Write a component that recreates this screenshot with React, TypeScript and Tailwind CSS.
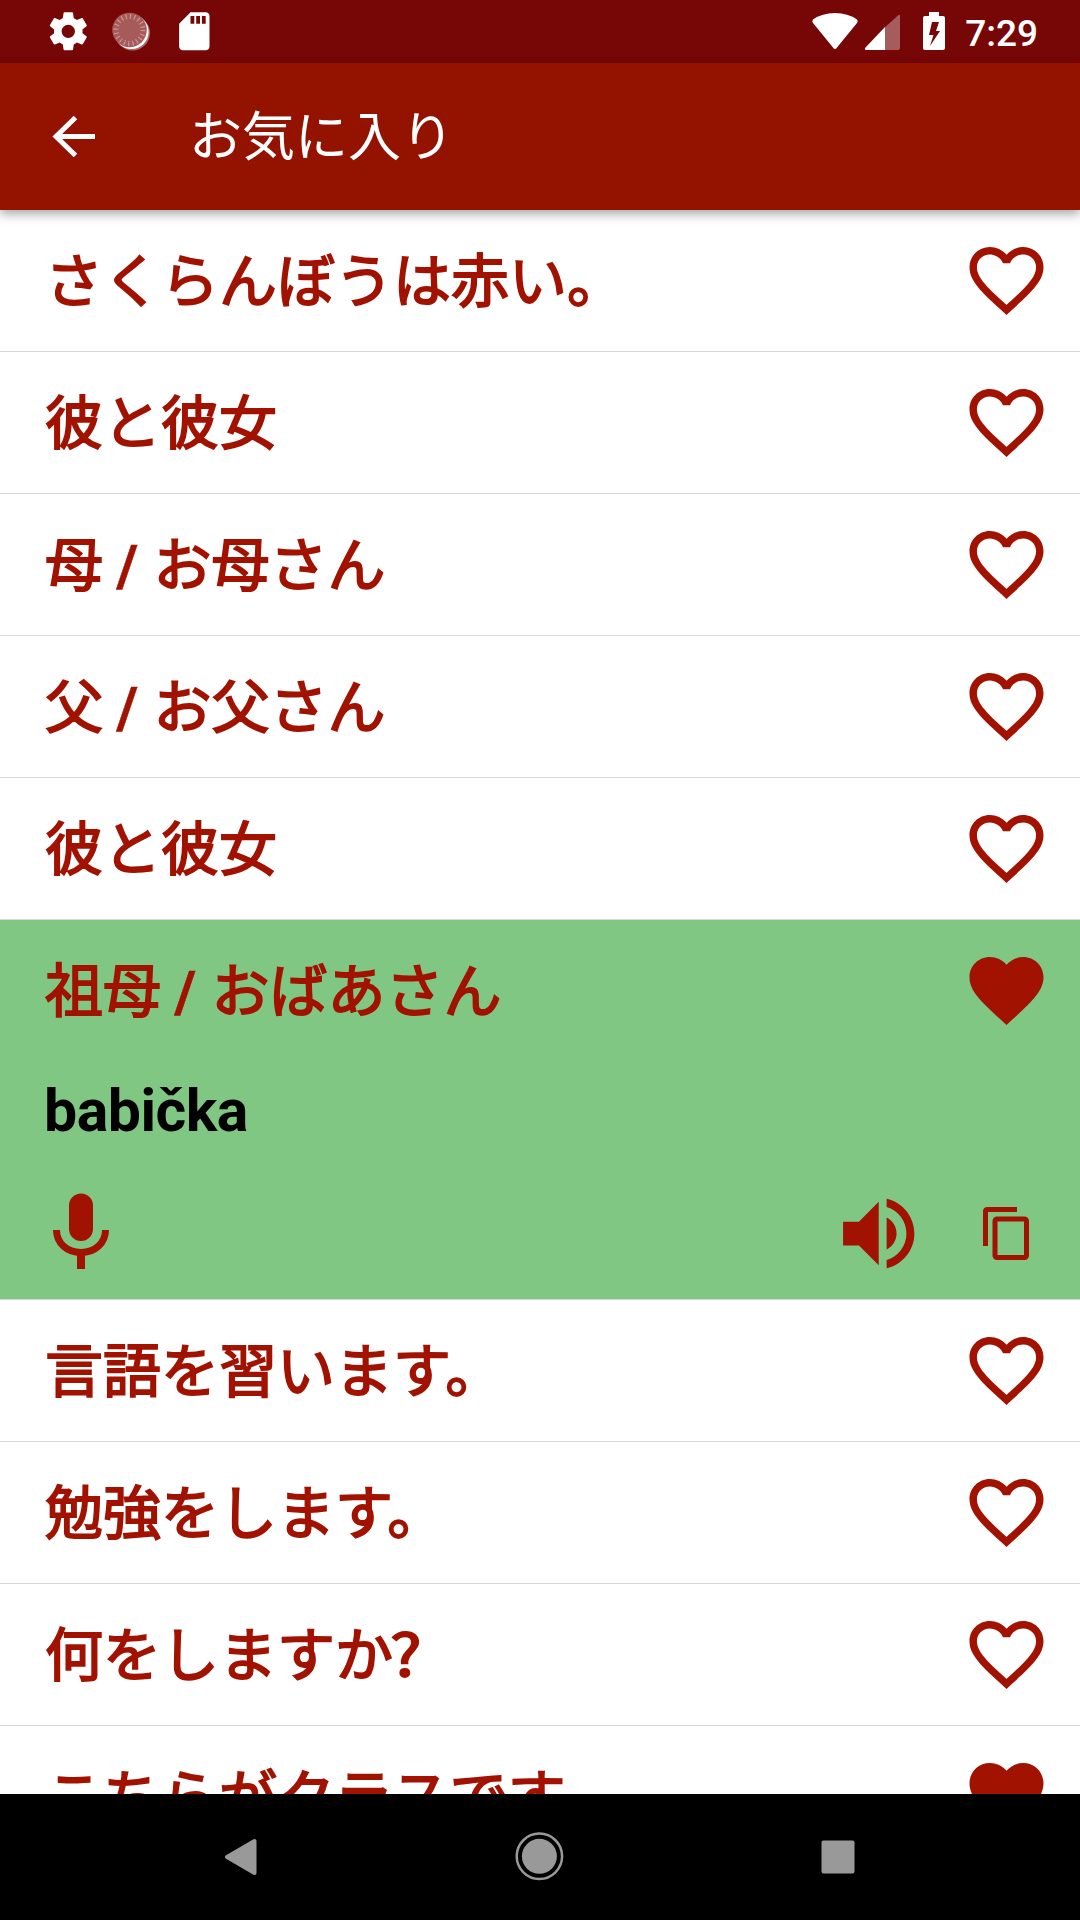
const heartFull =
  "M12 21.35l-1.45-1.32C5.4 15.36 2 12.28 2 8.5 2 5.42 4.42 3 7.5 3c1.74 0 3.41.81 4.5 2.09C13.09 3.81 14.76 3 16.5 3 19.58 3 22 5.42 22 8.5c0 3.78-3.4 6.86-8.55 11.54L12 21.35z";
const heartBorder =
  "M16.5 3c-1.74 0-3.41.81-4.5 2.09C10.91 3.81 9.24 3 7.5 3 4.42 3 2 5.42 2 8.5c0 3.78 3.4 6.86 8.55 11.54L12 21.35l1.45-1.32C18.6 15.36 22 12.28 22 8.5 22 5.42 19.58 3 16.5 3zm-4.4 15.55l-.1.1-.1-.1C7.14 14.24 4 11.39 4 8.5 4 6.5 5.5 5 7.5 5c1.54 0 3.04.99 3.57 2.36h1.87C13.46 5.99 14.96 5 16.5 5c2 0 3.5 1.5 3.5 3.5 0 2.89-3.14 5.74-7.9 10.05z";

type Phrase = { text: string; liked?: boolean; translation?: string };

const phrases: Phrase[] = [
  { text: "さくらんぼうは赤い。" },
  { text: "彼と彼女" },
  { text: "母 / お母さん" },
  { text: "父 / お父さん" },
  { text: "彼と彼女" },
  { text: "祖母 / おばあさん", liked: true, translation: "babička" },
  { text: "言語を習います。" },
  { text: "勉強をします。" },
  { text: "何をしますか?" },
  { text: "こちらがクラスです。", liked: true },
];

function Heart({ filled }: { filled?: boolean }) {
  return (
    <svg viewBox="0 0 75 68" className="h-[68px] w-[75px] shrink-0" fill="#a11200">
      <path transform="translate(-6.9 -11.1) scale(3.7)" d={filled ? heartFull : heartBorder} />
    </svg>
  );
}

function StatusBar() {
  return (
    <div className="flex h-[63px] shrink-0 items-center justify-between bg-[#770606] text-white">
      <svg viewBox="0 0 240 63" className="h-[63px] w-[240px]" fill="white">
        <path
          transform="translate(45.5 8.5) scale(1.9)"
          d="M19.43 12.98c.04-.32.07-.64.07-.98s-.03-.66-.07-.98l2.11-1.65c.19-.15.24-.42.12-.64l-2-3.46c-.12-.22-.39-.3-.61-.22l-2.49 1c-.52-.4-1.08-.73-1.69-.98l-.38-2.65C14.46 2.18 14.25 2 14 2h-4c-.25 0-.46.18-.49.42l-.38 2.65c-.61.25-1.17.59-1.69.98l-2.49-1c-.23-.09-.49 0-.61.22l-2 3.46c-.13.22-.07.49.12.64l2.11 1.65c-.04.32-.07.65-.07.98s.03.66.07.98l-2.11 1.65c-.19.15-.24.42-.12.64l2 3.46c.12.22.39.3.61.22l2.49-1c.52.4 1.08.73 1.69.98l.38 2.65c.03.24.24.42.49.42h4c.25 0 .46-.18.49-.42l.38-2.65c.61-.25 1.17-.59 1.69-.98l2.49 1c.23.09.49 0 .61-.22l2-3.46c.12-.22.07-.49-.12-.64l-2.11-1.65zM12 15.5c-1.93 0-3.5-1.57-3.5-3.5s1.57-3.5 3.5-3.5 3.5 1.57 3.5 3.5-1.57 3.5-3.5 3.5z"
        />
        <circle cx="132.5" cy="33" r="17.5" fill="#ad6a6a" />
        <circle cx="131.4" cy="31.8" r="17.2" />
        <circle cx="129.5" cy="30" r="17.3" fill="#a65a5a" />
        <circle cx="129.5" cy="30" r="13.5" fill="none" stroke="#c99494" strokeWidth="5" strokeDasharray="1.2 3.041" />
        <path
          transform="translate(171.5 8.5) scale(1.9)"
          d="M18 2h-8L4.02 8 4 20c0 1.100.9 2 2 2h12c1.100 0 2-.9 2-2V4c0-1.100-.9-2-2-2zm-6 6h-2V4h2v4zm3 0h-2V4h2v4zm3 0h-2V4h2v4z"
        />
      </svg>
      <div className="flex items-center pr-[42px]">
        <svg viewBox="810 0 140 63" className="mr-[15px] h-[63px] w-[140px]" fill="white">
          <path d="M835 49Q836 49 837 47.500L857 23Q858.500 21 857 19.500Q848 13 835 13T813 19.500Q811.500 21 813 23L833 47.500Q834 49 835 49Z" />
          <path d="M885 50V27.200L898 15.500Q900 14 900 16V48Q900 50 898 50Z" fillOpacity=".35" />
          <path d="M885 27V50H866Q864 50 865.500 47.500Z" />
          <path d="M929 12H939V16H943Q945 16 945 18V48Q945 50 943 50H925Q923 50 923 48V18Q923 16 925 16H929ZM932 22L929 35H933.500L930 46L940 31H936L939 22Z" fillRule="evenodd" />
        </svg>
        <span className="pt-[4px] font-['Roboto',sans-serif] text-[37px] leading-[59px] font-medium">7:29</span>
      </div>
    </div>
  );
}

// the slash comes from a real bold face, everything else is thickened by a stroke
function PhraseText({ text }: { text: string }) {
  return (
    <span className="pt-[2px] font-['Roboto','Noto_Sans_CJK_JP',sans-serif] text-[58px] leading-[68px] whitespace-pre text-[#a11200] [-webkit-text-stroke:1.8px_#a11200]">
      {text.split(/( \/ |\?)/).map((part, i) => {
        if (part === " / ") return <span key={i} className="-ml-px mr-px font-bold [-webkit-text-stroke:0.4px_#a11200]">{part}</span>;
        if (part === "?") return <span key={i} className="-ml-[3px] inline-block origin-left scale-x-115 font-['Noto_Sans_CJK_JP',sans-serif] leading-none">{part}</span>;
        return part;
      })}
    </span>
  );
}

function Row({ phrase }: { phrase: Phrase }) {
  return (
    <div className={phrase.translation ? "shrink-0 border-b border-[#d6d6d6] bg-[#81c784]" : "shrink-0 border-b border-[#d6d6d6] bg-white"}>
      <div className="flex h-[141px] items-center justify-between pr-[36px] pl-[45px]">
        <PhraseText text={phrase.text} />
        <Heart filled={phrase.liked} />
      </div>
      {phrase.translation && (
        <>
          <div className="flex h-[102px] items-center pb-px pl-[44px] font-['Roboto',sans-serif] text-[59px] font-bold tracking-[-0.5px] text-black">
            {phrase.translation}
          </div>
          <div className="flex h-[136px] items-center justify-between pr-[50px] pl-[53px]">
            <svg viewBox="53 1193 56 76" className="h-[76px] w-[56px]" fill="#a11200">
              <rect x="69" y="1193.500" width="24" height="47.500" rx="12" />
              <path d="M56.500 1230C56.500 1243 67 1252.500 81 1252.500S105.500 1243 105.500 1230" fill="none" stroke="#a11200" strokeWidth="7" />
              <path d="M77 1253H85V1269H77Z" />
            </svg>
            <div className="flex items-center gap-[67px] pt-[5px]">
              <svg viewBox="842 1198 73 71" className="h-[71px] w-[73px]" fill="#a11200">
                <path
                  transform="translate(831.2 1186) scale(3.96)"
                  d="M3 9v6h4l5 5V4L7 9H3zm13.5 3c0-1.77-1.02-3.29-2.5-4.03v8.05c1.48-.73 2.5-2.25 2.5-4.02zM14 3.23v2.06c2.89.86 5 3.54 5 6.71s-2.11 5.85-5 6.71v2.06c4.01-.91 7-4.49 7-8.77s-2.99-7.86-7-8.77z"
                />
              </svg>
              <svg viewBox="982 1206 48 55" className="h-[55px] w-[48px]" fill="none" stroke="#a11200" strokeWidth="5">
                <path d="M985.500 1246V1211.500Q985.500 1209.500 987.500 1209.500H1017" />
                <rect x="995" y="1219" width="31.500" height="38.500" rx="2" />
              </svg>
            </div>
          </div>
        </>
      )}
    </div>
  );
}

export default function App() {
  return (
    <div className="flex h-[1920px] w-[1080px] flex-col overflow-hidden bg-white">
      <StatusBar />
      <header className="z-10 flex h-[147px] shrink-0 items-center bg-[#931200] pl-[52px] text-white shadow-[0_4px_10px_rgba(0,0,0,0.35)]">
        <svg viewBox="52 115 44 44" className="mr-[93px] h-[44px] w-[44px]" fill="none" stroke="white" strokeWidth="5">
          <path d="M95 136.500H57M75.500 117.500L56 136.500L75.500 155.500" />
        </svg>
        <h1 className="pb-[8px] font-['Noto_Sans_CJK_JP',sans-serif] text-[53px] leading-[62px]">お気に入り</h1>
      </header>
      <main className="flex min-h-0 flex-1 flex-col overflow-hidden">
        {phrases.map((phrase, i) => (
          <Row key={i} phrase={phrase} />
        ))}
      </main>
      <nav className="h-[126px] shrink-0 bg-black">
        <svg viewBox="0 1794 1080 126" className="h-[126px] w-[1080px]" fill="#999">
          <path d="M227 1857L254.500 1841V1873Z" stroke="#999" strokeWidth="4" strokeLinejoin="round" />
          <circle cx="539.400" cy="1856.300" r="17.500" />
          <circle cx="539.400" cy="1856.300" r="22.700" fill="none" stroke="#999" strokeWidth="2.500" />
          <rect x="821.500" y="1840.500" width="33" height="33" rx="2" />
        </svg>
      </nav>
    </div>
  );
}
